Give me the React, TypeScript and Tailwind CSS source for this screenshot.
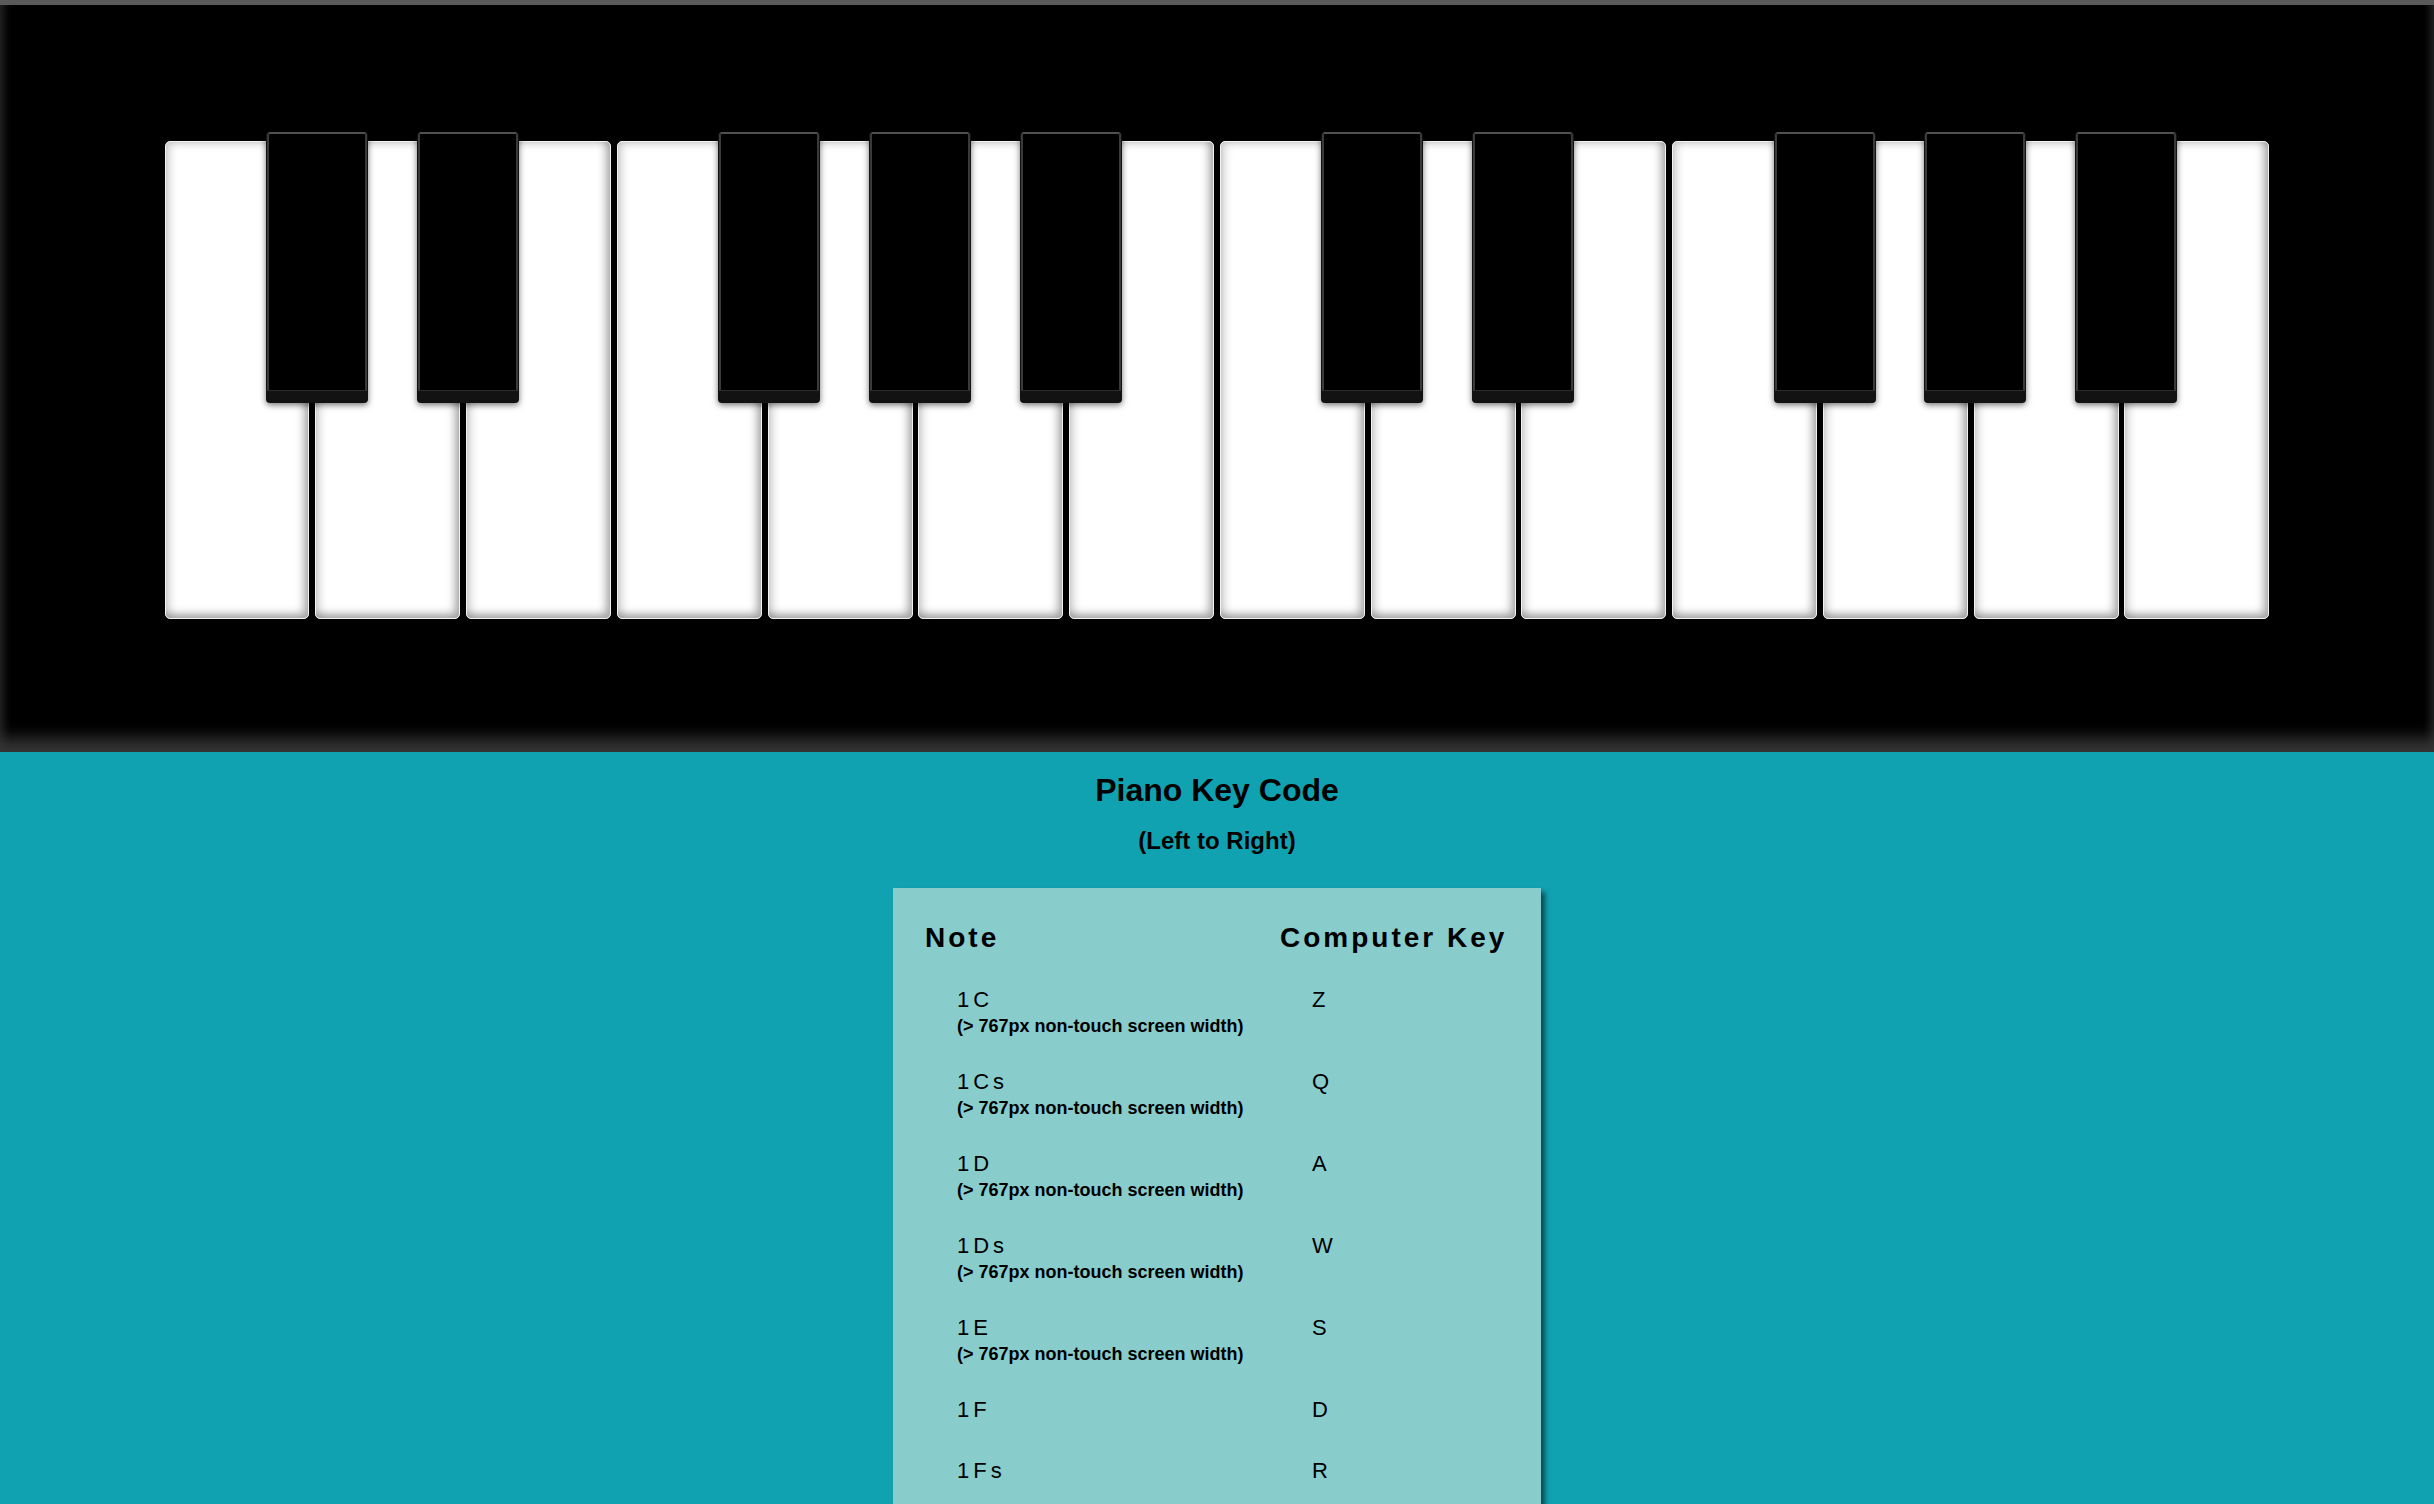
const whiteKeys = [
  { note: "1C", sharp: true },
  { note: "1D", sharp: true },
  { note: "1E", sharp: false },
  { note: "1F", sharp: true },
  { note: "1G", sharp: true },
  { note: "1A", sharp: true },
  { note: "1B", sharp: false },
  { note: "2C", sharp: true },
  { note: "2D", sharp: true },
  { note: "2E", sharp: false },
  { note: "2F", sharp: true },
  { note: "2G", sharp: true },
  { note: "2A", sharp: true },
  { note: "2B", sharp: false },
];

const keyCodes = [
  { note: "1C", key: "Z", wide: true },
  { note: "1Cs", key: "Q", wide: true },
  { note: "1D", key: "A", wide: true },
  { note: "1Ds", key: "W", wide: true },
  { note: "1E", key: "S", wide: true },
  { note: "1F", key: "D", wide: false },
  { note: "1Fs", key: "R", wide: false },
  { note: "1G", key: "F", wide: false },
  { note: "1Gs", key: "T", wide: false },
];

function BlackKey() {
  return (
    <div className="absolute left-[100.5px] top-[-9.7px] z-10 flex h-[271px] w-[102px] flex-col rounded-[4px] bg-[#121212] shadow-[0_2px_6px_rgba(0,0,0,0.55)]">
      <div className="mx-[1px] flex-1 rounded-t-[3px] border-x-[2px] border-t-[2px] border-b border-x-[#3a3a3a] border-t-[#505050] border-b-[#2c2c2c] bg-black" />
      <div className="h-[12px]" />
    </div>
  );
}

export default function App() {
  return (
    <div className="min-h-screen bg-[#11a2b2] font-['Liberation_Sans',Arial,Helvetica,sans-serif] text-black">
      <div className="h-[752px] border-t-[5px] border-[#5a5a5a] bg-black pt-[136px] shadow-[inset_0_-22px_16px_-8px_#353535,inset_10px_0_10px_-6px_#222,inset_-10px_0_10px_-6px_#222]">
        <div className="mx-auto flex h-[478px] w-[2105px] gap-[5.8px]">
          {whiteKeys.map((k) => (
            <div
              key={k.note}
              className="relative flex-1 rounded-[5px] border border-[#f2f2f2] bg-white shadow-[inset_-4px_-4px_8px_rgba(0,0,0,0.34),inset_4px_2px_8px_rgba(0,0,0,0.17)]"
            >
              {k.sharp && <BlackKey />}
            </div>
          ))}
        </div>
      </div>

      <h1 className="mt-[20px] text-center text-[32px] font-bold leading-[37px]">Piano Key Code</h1>
      <h2 className="mt-[18px] text-center text-[24px] font-bold leading-[28px]">(Left to Right)</h2>

      <div className="mx-auto mt-[33px] w-[648px] bg-[#88cccc] px-[32px] pt-[34px] pb-[34px] shadow-[4px_4px_5px_rgba(0,0,0,0.55)]">
        <div className="grid grid-cols-[355px_1fr] pb-[15px] text-[28px] font-bold leading-[32px] tracking-[3px]">
          <div>Note</div>
          <div>Computer Key</div>
        </div>
        {keyCodes.map((row) => (
          <div key={row.note} className="grid grid-cols-[355px_1fr] py-[18px]">
            <div className="pl-[32px]">
              <div className="text-[22px] leading-[25px] tracking-[4px]">{row.note}</div>
              {row.wide && (
                <div className="mt-[7px] text-[18px] font-bold leading-[14px]">(&gt; 767px non-touch screen width)</div>
              )}
            </div>
            <div className="pl-[32px] text-[22px] leading-[25px] tracking-[4px]">{row.key}</div>
          </div>
        ))}
      </div>
    </div>
  );
}
